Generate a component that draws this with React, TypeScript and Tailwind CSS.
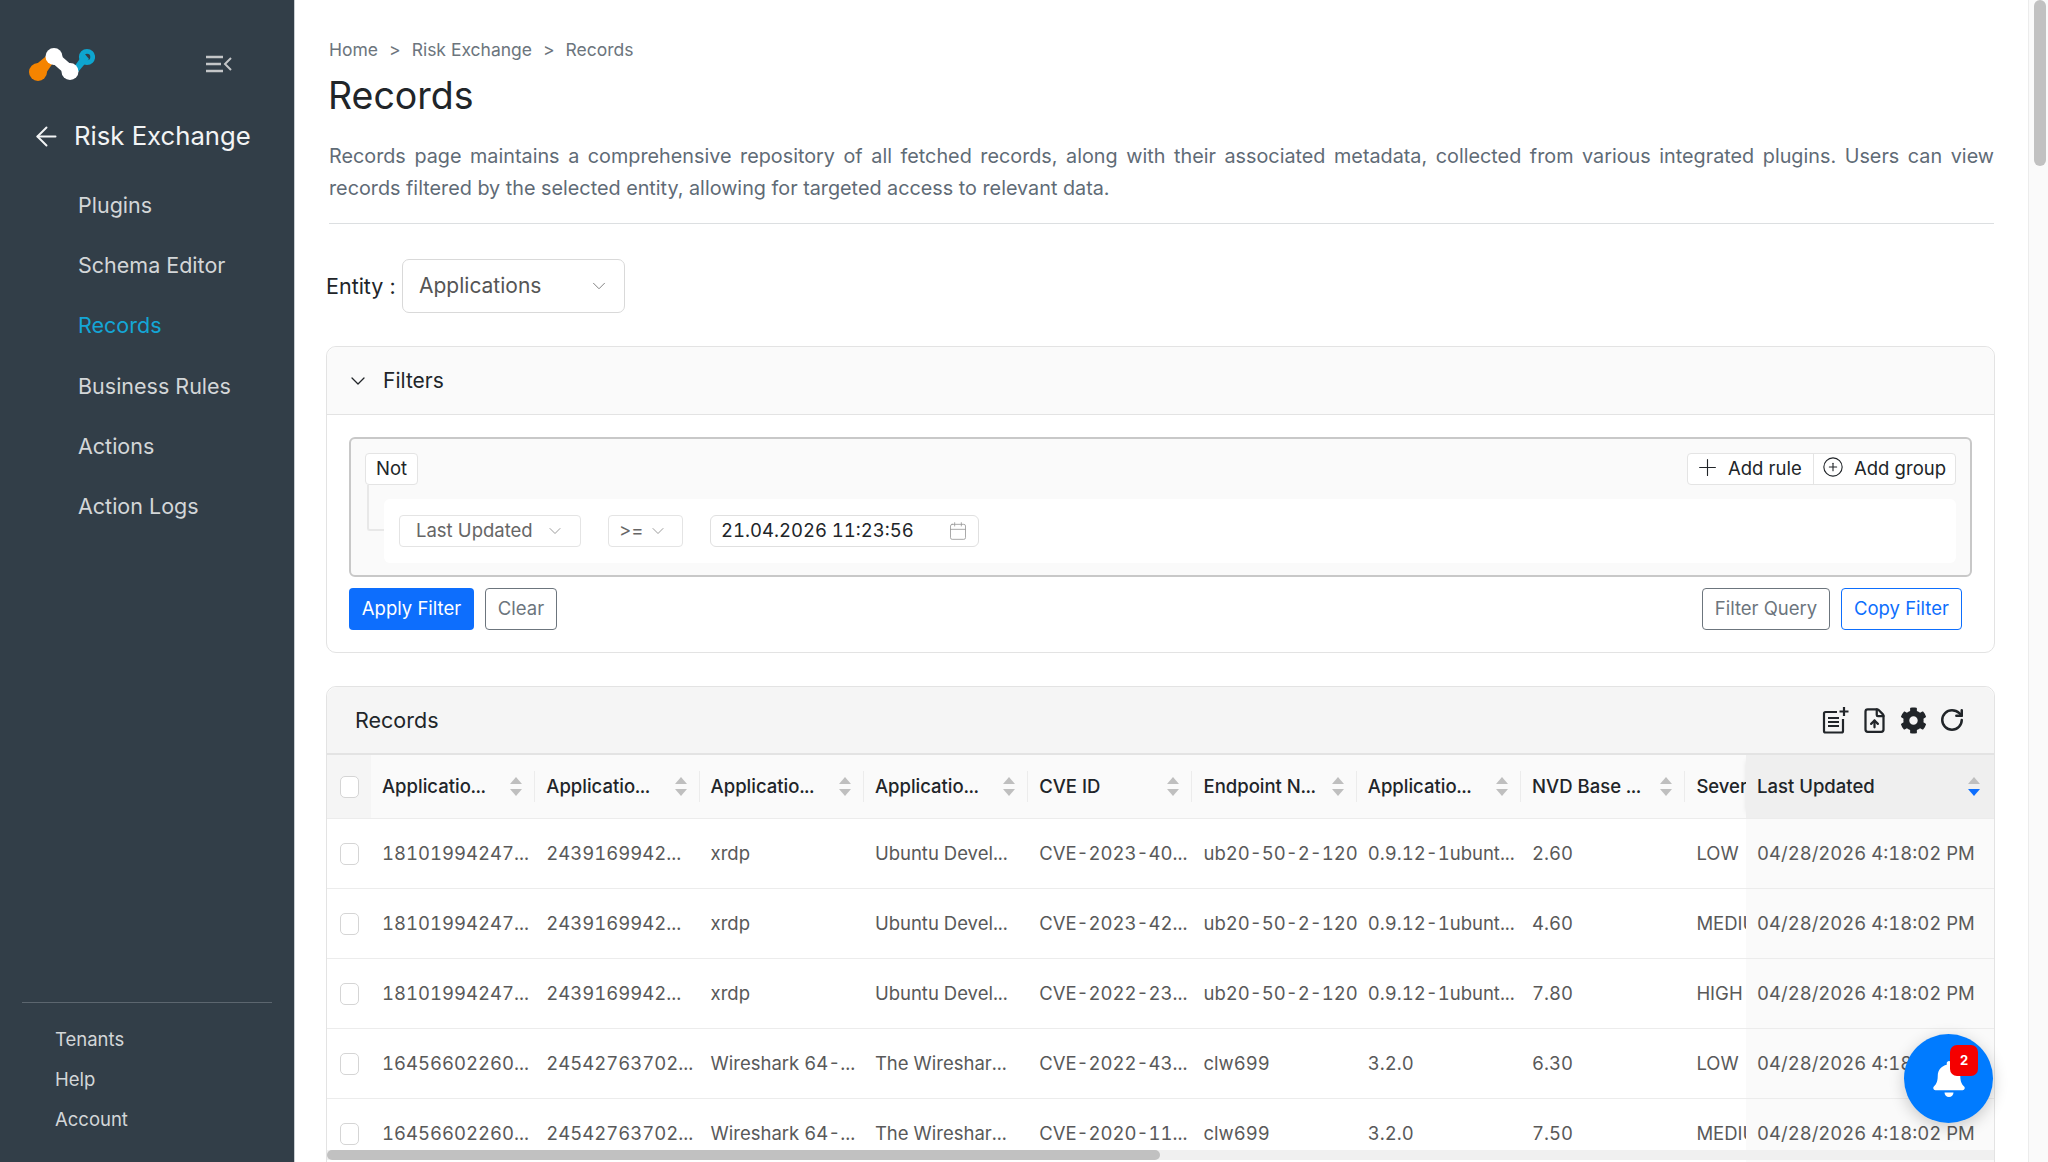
import { ArrowLeft, Calendar, ChevronDown, CirclePlus, FileUp, Plus, RotateCw } from 'lucide-react';
import { FaBell, FaCog } from 'react-icons/fa';

const navItems = ['Plugins', 'Schema Editor', 'Records', 'Business Rules', 'Actions', 'Action Logs'];
const footerItems = ['Tenants', 'Help', 'Account'];

const columns = ['Applicatio...', 'Applicatio...', 'Applicatio...', 'Applicatio...', 'CVE ID', 'Endpoint N...', 'Applicatio...', 'NVD Base ...'];

const rows = [
  ['18101994247...', '2439169942...', 'xrdp', 'Ubuntu Devel...', 'CVE-2023-40...', 'ub20-50-2-120', '0.9.12-1ubunt...', '2.60', 'LOW'],
  ['18101994247...', '2439169942...', 'xrdp', 'Ubuntu Devel...', 'CVE-2023-42...', 'ub20-50-2-120', '0.9.12-1ubunt...', '4.60', 'MEDIUM'],
  ['18101994247...', '2439169942...', 'xrdp', 'Ubuntu Devel...', 'CVE-2022-23...', 'ub20-50-2-120', '0.9.12-1ubunt...', '7.80', 'HIGH'],
  ['16456602260...', '24542763702...', 'Wireshark 64-...', 'The Wireshar...', 'CVE-2022-43...', 'clw699', '3.2.0', '6.30', 'LOW'],
  ['16456602260...', '24542763702...', 'Wireshark 64-...', 'The Wireshar...', 'CVE-2020-11...', 'clw699', '3.2.0', '7.50', 'MEDIUM'],
];

function Logo() {
  return (
    <svg width="66" height="34" viewBox="0 0 66 34">
      <path d="M4 20 L21 6 L26 13 L15 29z" fill="#f58400" />
      <circle cx="9" cy="25" r="9" fill="#f58400" />
      <path d="M45 20 L55 6 L60 12 L49 25z" fill="#0ea5cf" />
      <circle cx="58" cy="10" r="5.700" fill="none" stroke="#0ea5cf" strokeWidth="4.800" />
      <path d="M25 10 L41 24" stroke="#fff" strokeWidth="11" strokeLinecap="round" fill="none" />
      <circle cx="25" cy="9.500" r="8.500" fill="#fff" />
      <circle cx="41" cy="24.500" r="8.500" fill="#fff" />
    </svg>
  );
}

function CollapseIcon() {
  return (
    <svg width="26" height="18" viewBox="0 0 26 18" fill="none" stroke="#c4c6c8" strokeWidth="2.400">
      <path d="M0 2h17M0 9h15M0 16h17" />
      <path d="M25 3l-6 6 6 6" strokeWidth="2" />
    </svg>
  );
}

function SortIcon({ active }: { active?: boolean }) {
  return (
    <svg width="12" height="19" viewBox="0 0 12 19" className="shrink-0">
      <path d="M6 0l6 7H0z" fill="#bfbfbf" />
      <path d="M6 19l6-7H0z" fill={active ? '#0d6efd' : '#bfbfbf'} />
    </svg>
  );
}

function NewListIcon() {
  return (
    <svg width="27" height="27" viewBox="0 0 27 27" fill="none" stroke="#212529" strokeWidth="2.200">
      <path d="M15 5H3.500A1.500 1.500 0 0 0 2 6.500V24a1.500 1.500 0 0 0 1.500 1.500h16A1.500 1.500 0 0 0 21 24V12" />
      <path d="M6 11h11M6 15h11M6 19h11" />
      <path d="M22 0v9M17.500 4.500h9" />
    </svg>
  );
}

function Checkbox() {
  return <span className="block h-[22px] w-[19px] rounded-[5px] border border-[#d5d5d5] bg-white" />;
}

function OutlineButton({ label, className }: { label: string; className: string }) {
  return (
    <button className={`h-[42px] rounded-[4px] border bg-white text-[18.500px] ${className}`}>
      {label}
    </button>
  );
}

export default function App() {
  return (
    <div className="relative flex h-[1162px] w-[2048px] overflow-hidden bg-white font-['Inter',sans-serif] text-[18.500px] text-[#212529]">
      {/* Sidebar */}
      <aside className="flex w-[295px] shrink-0 flex-col border-r border-[#c9ced2] bg-[#323e48]">
        <div className="flex items-center justify-between pl-[29px] pr-[62px] pt-[47px]">
          <Logo />
          <CollapseIcon />
        </div>
        <div className="mt-[37px] flex items-center gap-[12px] pl-[31px] text-[#f2f4f5]">
          <ArrowLeft size={31} strokeWidth={1.500} />
          <span className="text-[25.700px] font-normal leading-[36px]">Risk Exchange</span>
        </div>
        <nav className="mt-[21px] flex flex-col">
          {navItems.map((item) => (
            <a
              key={item}
              className={`flex h-[60.200px] items-center pl-[78px] text-[21.500px] ${
                item === 'Records' ? 'text-[#14a6d6]' : 'text-[#d3d6d8]'
              }`}
            >
              {item}
            </a>
          ))}
        </nav>
        <div className="mx-[22px] mt-auto border-t border-[#5c666f] pt-[17px] pb-[22px]">
          {footerItems.map((item) => (
            <a key={item} className="flex h-[40px] items-center pl-[33px] text-[18.500px] text-[#d3d6d8]">
              {item}
            </a>
          ))}
        </div>
      </aside>

      {/* Main */}
      <main className="min-w-0 flex-1 pl-[34px] pr-[34px]">
        <div className="flex items-center gap-[11px] pt-[39px] text-[17.500px] leading-[22px] text-[#6c757d]">
          <span>Home</span>
          <span>&gt;</span>
          <span>Risk Exchange</span>
          <span>&gt;</span>
          <span>Records</span>
        </div>
        <h1 className="ml-[-1px] mt-[6px] text-[37.500px] font-normal leading-[58px]">Records</h1>
        <p className="mt-[15px] text-justify text-[19.800px] leading-[32px] text-[#5f6b76]">
          Records page maintains a comprehensive repository of all fetched records, along with their associated metadata, collected from various integrated plugins. Users can view records filtered by the selected entity, allowing for targeted access to relevant data.
        </p>
        <div className="mt-[19px] border-t border-[#dcdfe1]" />

        <div className="ml-[-3px] mt-[35px] flex items-center">
          <span className="w-[76px] text-[21.500px]">Entity :</span>
          <div className="flex h-[54px] w-[223px] items-center justify-between rounded-[7px] border border-[#d9d9d9] pl-[16px] pr-[14px] text-[21px] text-[#555]">
            Applications
            <ChevronDown size={22} strokeWidth={1} className="text-[#777]" />
          </div>
        </div>

        {/* Filters */}
        <section className="ml-[-3px] mr-[-1px] mt-[33px] rounded-[10px] border border-[#e3e3e3]">
          <div className="flex h-[68px] items-center rounded-t-[10px] border-b border-[#e3e3e3] bg-[#fafafa] pl-[19px]">
            <ChevronDown size={24} strokeWidth={1.300} />
            <span className="ml-[13px] text-[21px]">Filters</span>
          </div>
          <div className="px-[22px] pb-[22px] pt-[22px]">
            <div className="relative h-[140px] rounded-[6px] border-2 border-[#c8c8c8] bg-[#fafafa] pl-[14px] pr-[14px] pt-[14px]">
              <div className="flex items-center justify-between">
                <span className="flex h-[32px] w-[53px] items-center justify-center rounded-[4px] border border-[#e4e4e4] bg-white">
                  Not
                </span>
                <div className="flex h-[32px] items-stretch rounded-[4px] border border-[#e4e4e4] bg-white">
                  <span className="flex w-[125px] items-center pl-[6px]">
                    <Plus size={27} strokeWidth={1} className="-translate-y-[2px]" />
                    <span className="ml-[7px]">Add rule</span>
                  </span>
                  <span className="flex w-[142px] items-center border-l border-[#e4e4e4] pl-[8px]">
                    <CirclePlus size={22} strokeWidth={1.200} className="-translate-y-[2px]" />
                    <span className="ml-[10px]">Add group</span>
                  </span>
                </div>
              </div>
              <div className="absolute left-[16px] top-[46px] h-[46px] w-[22px] rounded-bl-[3px] border-b-2 border-l-2 border-[#e8e8e8]" />
              <div className="relative ml-[19px] mt-[14px] flex h-[64px] items-center rounded-[6px] bg-white pl-[15px]">
                <div className="flex h-[32px] w-[182px] items-center justify-between rounded-[4px] border border-[#e4e4e4] pl-[16px] pr-[15px] text-[#666]">
                  Last Updated
                  <ChevronDown size={20} strokeWidth={1} className="text-[#888]" />
                </div>
                <div className="ml-[27px] flex h-[32px] w-[75px] items-center justify-between rounded-[4px] border border-[#e4e4e4] pl-[10px] pr-[14px] text-[#666]">
                  &gt;=
                  <ChevronDown size={20} strokeWidth={1} className="text-[#888]" />
                </div>
                <div className="ml-[27px] flex h-[32px] w-[269px] items-center justify-between rounded-[6px] border border-[#e0e0e0] pl-[10px] pr-[10px] tabular-nums">
                  21.04.2026 11:23:56
                  <Calendar size={20} strokeWidth={1} className="text-[#999]" />
                </div>
              </div>
            </div>
            <div className="mt-[11px] flex items-center">
              <button className="h-[42px] w-[125px] rounded-[4px] bg-[#0d6efd] text-white">Apply Filter</button>
              <OutlineButton label="Clear" className="ml-[11px] w-[72px] border-[#6c757d] text-[#6c757d]" />
              <OutlineButton label="Filter Query" className="ml-auto w-[128px] border-[#6c757d] text-[#6c757d]" />
              <OutlineButton label="Copy Filter" className="ml-[11px] mr-[10px] w-[121px] border-[#0d6efd] text-[#0d6efd]" />
            </div>
          </div>
        </section>

        {/* Records table */}
        <section className="ml-[-3px] mr-[-1px] mt-[33px] rounded-t-[10px] border border-[#e3e3e3]">
          <div className="flex h-[68px] items-center justify-between rounded-t-[10px] border-b-2 border-[#e3e3e3] bg-[#f5f5f5] pl-[28px] pr-[29px]">
            <span className="text-[21.500px]">Records</span>
            <div className="flex items-center gap-[12px]">
              <NewListIcon />
              <FileUp size={27} strokeWidth={2} />
              <FaCog size={27} />
              <RotateCw size={26} strokeWidth={2.300} />
            </div>
          </div>
          <div className="relative tabular-nums">
            <div className="flex h-[64px] items-center border-b border-[#ececec] bg-[#fafafa] font-medium">
              <div className="flex h-full w-[44px] shrink-0 items-center justify-center bg-[#f5f5f5]">
                <Checkbox />
              </div>
              {columns.map((col, i) => (
                <div key={i} className="relative flex h-full w-[164.300px] shrink-0 items-center justify-between pl-[11px] pr-[13px]">
                  <span>{col}</span>
                  <SortIcon />
                  <span className="absolute right-0 top-[16px] h-[31px] w-px bg-[#ececec]" />
                </div>
              ))}
              <div className="flex h-full min-w-0 flex-1 items-center overflow-hidden pl-[11px]">Severity</div>
              <div className="flex h-full w-[248px] shrink-0 items-center justify-between bg-[#efefef] pl-[11px] pr-[14px] shadow-[-4px_0_6px_-6px_rgba(0,0,0,0.2)]">
                <span>Last Updated</span>
                <SortIcon active />
              </div>
            </div>
            {rows.map((row, i) => (
              <div key={i} className="flex h-[70px] items-center border-b border-[#ececec] text-[#595959]">
                <div className="flex h-full w-[44px] shrink-0 items-center justify-center">
                  <Checkbox />
                </div>
                {row.slice(0, 8).map((cell, j) => (
                  <div key={j} className="w-[164.300px] shrink-0 overflow-hidden whitespace-nowrap pl-[11px]">
                    {cell}
                  </div>
                ))}
                <div className="min-w-0 flex-1 overflow-hidden whitespace-nowrap pl-[11px]">{row[8]}</div>
                <div className="flex h-full w-[248px] shrink-0 items-center bg-[#fafafa] pl-[11px] whitespace-nowrap">
                  04/28/2026 4:18:02 PM
                </div>
              </div>
            ))}
            <div className="absolute left-0 right-0 top-[395px] h-[10px] bg-[#f0f0f0]">
              <div className="h-full w-[833px] rounded-full bg-[#c1c1c1]" />
            </div>
          </div>
        </section>
      </main>

      {/* Page scrollbar */}
      <div className="w-[20px] shrink-0 border-l border-[#ececec] bg-[#fafafa] pl-[5px] pr-[2px]">
        <div className="h-[166px] rounded-full bg-[#c1c1c1]" />
      </div>

      {/* Notifications */}
      <button className="absolute left-[1904px] top-[1034px] flex h-[89px] w-[89px] items-center justify-center rounded-full bg-[#007bff] text-white shadow-[0_4px_16px_rgba(0,0,0,0.2)]">
        <FaBell size={36} />
        <span className="absolute left-[46px] top-[11px] flex h-[31px] w-[28px] items-center justify-center rounded-[7px] bg-[#f50000] text-[13px] font-bold text-white">
          2
        </span>
      </button>
    </div>
  );
}
